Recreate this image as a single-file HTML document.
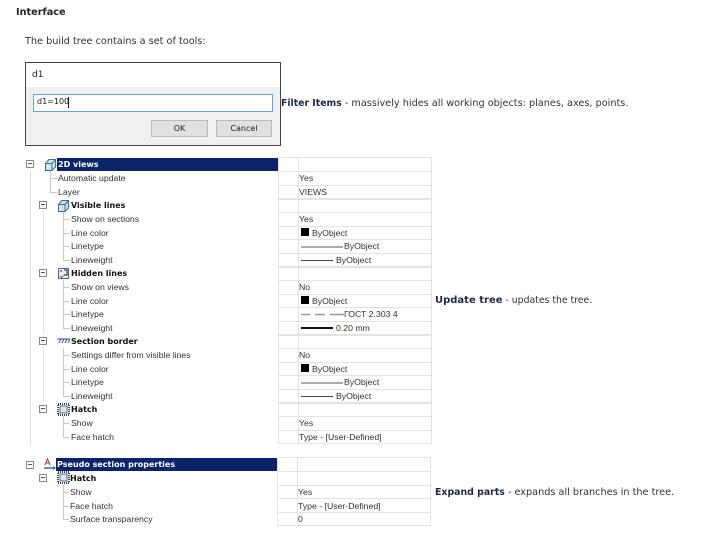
<!DOCTYPE html>
<html><head><meta charset="utf-8">
<style>
html,body{margin:0;padding:0;background:#fff;width:707px;height:533px;overflow:hidden}
body{position:relative;font-family:"DejaVu Sans","Liberation Sans",sans-serif;color:#333}
.a{position:absolute;white-space:nowrap}
.b{font-size:9.7px;line-height:14px;color:#333}
.b b{color:#1c2b4a}
.t{position:absolute;white-space:nowrap;font-family:"Liberation Sans",sans-serif;font-size:8.7px;line-height:12px;color:#333}
.h{font-family:"DejaVu Sans",sans-serif;font-weight:bold;font-size:8px;color:#111}
.w{color:#fff;font-family:"DejaVu Sans",sans-serif;font-weight:bold;font-size:8px}
.l{position:absolute;background:#e4e4dc}
.m{position:absolute;width:6px;height:6px;border:1px solid #8a8a8a;background:#fff}
.m:after{content:"";position:absolute;left:1px;top:2px;width:4px;height:1px;background:#555}
.g{position:absolute;background:#c8c8c8}
.s{position:absolute;width:8px;height:8px;background:#000}
</style></head><body>
<div class="a" style="left:16px;top:6px;font-size:9.7px;line-height:14px;font-weight:bold;color:#222">Interface</div>
<div class="a" style="left:25px;top:35px;font-size:9.7px;line-height:14px;color:#333">The build tree contains a set of tools:</div>

<div class="a" style="left:25px;top:62px;width:254px;height:82px;border:1px solid #444;background:#f0f0f0">
<div class="a" style="left:0;top:0;width:254px;height:24px;background:#fff"></div>
<div class="a" style="left:6px;top:6px;font-family:'DejaVu Sans';font-size:9px;line-height:12px;color:#222">d1</div>
<div class="a" style="left:7px;top:31px;width:238px;height:16px;border:1px solid #5ea6dc;background:#fff"></div>
<div class="a" style="left:11px;top:33px;font-family:'DejaVu Sans';font-size:8px;line-height:12px;color:#222">d1=100</div>
<div class="a" style="left:42px;top:34px;width:1px;height:11px;background:#111"></div>
<div class="a" style="left:125px;top:57px;width:55px;height:15px;border:1px solid #bcbcbc;background:#e1e1e1;font-family:'DejaVu Sans';font-size:8px;line-height:15px;text-align:center;color:#222">OK</div>
<div class="a" style="left:190px;top:57px;width:54px;height:15px;border:1px solid #bcbcbc;background:#e1e1e1;font-family:'DejaVu Sans';font-size:8px;line-height:15px;text-align:center;color:#222">Cancel</div>
</div>

<div class="a b" style="left:281px;top:97px"><b style="font-size:9.3px">Filter Items</b> - massively hides all working objects: planes, axes, points.</div>
<div class="a b" style="left:435px;top:294px;font-size:9.3px"><b style="font-size:10px">Update tree</b> - updates the tree.</div>
<div class="a b" style="left:435px;top:486px"><b style="font-size:9.4px">Expand parts</b> - expands all branches in the tree.</div>

<!-- table 1 grid -->
<div class="l" style="left:278px;top:157px;width:154px;height:1px"></div>
<div class="l" style="left:278px;top:171px;width:154px;height:1px"></div>
<div class="l" style="left:278px;top:185px;width:154px;height:1px"></div>
<div class="l" style="left:278px;top:198px;width:154px;height:2px"></div>
<div class="l" style="left:278px;top:212px;width:154px;height:1px"></div>
<div class="l" style="left:278px;top:226px;width:154px;height:1px"></div>
<div class="l" style="left:278px;top:239px;width:154px;height:1px"></div>
<div class="l" style="left:278px;top:253px;width:154px;height:1px"></div>
<div class="l" style="left:278px;top:266px;width:154px;height:2px"></div>
<div class="l" style="left:278px;top:280px;width:154px;height:1px"></div>
<div class="l" style="left:278px;top:294px;width:154px;height:1px"></div>
<div class="l" style="left:278px;top:307px;width:154px;height:1px"></div>
<div class="l" style="left:278px;top:321px;width:154px;height:1px"></div>
<div class="l" style="left:278px;top:334px;width:154px;height:2px"></div>
<div class="l" style="left:278px;top:348px;width:154px;height:1px"></div>
<div class="l" style="left:278px;top:362px;width:154px;height:1px"></div>
<div class="l" style="left:278px;top:375px;width:154px;height:1px"></div>
<div class="l" style="left:278px;top:389px;width:154px;height:1px"></div>
<div class="l" style="left:278px;top:402px;width:154px;height:2px"></div>
<div class="l" style="left:278px;top:416px;width:154px;height:1px"></div>
<div class="l" style="left:278px;top:430px;width:154px;height:1px"></div>
<div class="l" style="left:278px;top:443px;width:154px;height:1px"></div>
<div class="l" style="left:278px;top:157px;width:1px;height:287px"></div>
<div class="l" style="left:298px;top:157px;width:1px;height:287px"></div>
<div class="l" style="left:431px;top:157px;width:1px;height:287px"></div>

<!-- table 2 grid -->
<div class="l" style="left:277px;top:457px;width:154px;height:1px"></div>
<div class="l" style="left:277px;top:471px;width:154px;height:1px"></div>
<div class="l" style="left:277px;top:485px;width:154px;height:1px"></div>
<div class="l" style="left:277px;top:498px;width:154px;height:1px"></div>
<div class="l" style="left:277px;top:512px;width:154px;height:1px"></div>
<div class="l" style="left:277px;top:525px;width:154px;height:1px"></div>
<div class="l" style="left:277px;top:457px;width:1px;height:69px"></div>
<div class="l" style="left:297px;top:457px;width:1px;height:69px"></div>
<div class="l" style="left:430px;top:457px;width:1px;height:69px"></div>

<!-- selection bars -->
<div class="a" style="left:57px;top:158px;width:221px;height:13px;background:#0a246a"></div>
<div class="a" style="left:56px;top:458px;width:221px;height:13px;background:#0a246a"></div>

<!-- tree guides -->
<div class="l" style="left:30px;top:170px;width:1px;height:274px;background:#dcdcdc"></div>
<div class="l" style="left:43px;top:211px;width:1px;height:54px;background:#e2e2e2"></div>
<div class="l" style="left:43px;top:279px;width:1px;height:54px;background:#e2e2e2"></div>
<div class="l" style="left:43px;top:347px;width:1px;height:54px;background:#e2e2e2"></div>
<div class="g" style="left:50px;top:171px;width:1px;height:21px"></div>
<div class="g" style="left:50px;top:178px;width:7px;height:1px"></div>
<div class="g" style="left:50px;top:192px;width:7px;height:1px"></div>
<div class="g" style="left:63px;top:212px;width:1px;height:48px"></div>
<div class="g" style="left:63px;top:219px;width:7px;height:1px"></div>
<div class="g" style="left:63px;top:233px;width:7px;height:1px"></div>
<div class="g" style="left:63px;top:246px;width:7px;height:1px"></div>
<div class="g" style="left:63px;top:260px;width:7px;height:1px"></div>
<div class="g" style="left:63px;top:280px;width:1px;height:48px"></div>
<div class="g" style="left:63px;top:287px;width:7px;height:1px"></div>
<div class="g" style="left:63px;top:301px;width:7px;height:1px"></div>
<div class="g" style="left:63px;top:314px;width:7px;height:1px"></div>
<div class="g" style="left:63px;top:328px;width:7px;height:1px"></div>
<div class="g" style="left:63px;top:348px;width:1px;height:48px"></div>
<div class="g" style="left:63px;top:355px;width:7px;height:1px"></div>
<div class="g" style="left:63px;top:369px;width:7px;height:1px"></div>
<div class="g" style="left:63px;top:382px;width:7px;height:1px"></div>
<div class="g" style="left:63px;top:396px;width:7px;height:1px"></div>
<div class="g" style="left:63px;top:416px;width:1px;height:21px"></div>
<div class="g" style="left:63px;top:423px;width:7px;height:1px"></div>
<div class="g" style="left:63px;top:437px;width:7px;height:1px"></div>
<div class="g" style="left:63px;top:485px;width:1px;height:35px"></div>
<div class="g" style="left:63px;top:492px;width:6px;height:1px"></div>
<div class="g" style="left:63px;top:506px;width:6px;height:1px"></div>
<div class="g" style="left:63px;top:519px;width:6px;height:1px"></div>

<!-- expanders -->
<div class="m" style="left:26px;top:160px"></div>
<div class="m" style="left:39px;top:201px"></div>
<div class="m" style="left:39px;top:269px"></div>
<div class="m" style="left:39px;top:337px"></div>
<div class="m" style="left:39px;top:405px"></div>
<div class="m" style="left:26px;top:461px"></div>
<div class="m" style="left:39px;top:474px"></div>

<!-- icons -->
<svg class="a" style="left:44px;top:158px" width="13" height="14" viewBox="0 0 13 14"><path d="M1.5 5.5L5 1.5H11.5V9L8 12.500H1.500Z" fill="#cfe3f0" stroke="#3d6f96"/><path d="M1.500 5.500H8V12.500M8 5.500L11.500 1.500" fill="none" stroke="#3d6f96"/></svg>
<svg class="a" style="left:57px;top:199px" width="13" height="14" viewBox="0 0 13 14"><path d="M1.5 5.500L5 1.500H11.500V9L8 12.500H1.500Z" fill="#cfe3f0" stroke="#3d6f96"/><path d="M1.500 5.500H8V12.500M8 5.500L11.500 1.500" fill="none" stroke="#3d6f96"/></svg>
<svg class="a" style="left:57px;top:267px" width="13" height="13" viewBox="0 0 13 13"><rect x="1.500" y="1.500" width="10" height="10" fill="#e8f0f6" stroke="#3d6f96"/><path d="M7 3h3v5H7M3 4h2" fill="none" stroke="#223" stroke-width="1"/><path d="M2.500 9l2 1.500 2-2" fill="none" stroke="#c24848"/></svg>
<svg class="a" style="left:57px;top:338px" width="13" height="7" viewBox="0 0 13 7"><path d="M0 1H13M2 5L4 1M5 5L7 1M8 5L10 1M11 5L13 1" fill="none" stroke="#4a6f9c" stroke-width="1.200"/></svg>
<svg class="a" style="left:57px;top:403px" width="13" height="13" viewBox="0 0 13 13"><rect x="1" y="1" width="11" height="11" fill="none" stroke="#444" stroke-width="2" stroke-dasharray="1 1"/><rect x="3" y="3" width="7" height="7" fill="#dbe8f2" stroke="#4a6f9c"/></svg>
<svg class="a" style="left:57px;top:471px" width="13" height="13" viewBox="0 0 13 13"><rect x="1" y="1" width="11" height="11" fill="none" stroke="#444" stroke-width="2" stroke-dasharray="1 1"/><rect x="3" y="3" width="7" height="7" fill="#dbe8f2" stroke="#4a6f9c"/></svg>
<svg class="a" style="left:44px;top:458px" width="13" height="14" viewBox="0 0 13 14"><path d="M1 7L3.500 1L6 7M2 5H5" fill="none" stroke="#b03a3a"/><path d="M0 10H10" stroke="#3a6aa8" stroke-width="1.500"/><path d="M9 8l3 2-3 2z" fill="#3a6aa8"/></svg>

<!-- tree labels -->
<div class="t w" style="left:58px;top:159px">2D views</div>
<div class="t" style="left:58px;top:172px">Automatic update</div>
<div class="t" style="left:58px;top:186px">Layer</div>
<div class="t h" style="left:71px;top:200px">Visible lines</div>
<div class="t" style="left:71px;top:213px">Show on sections</div>
<div class="t" style="left:71px;top:227px">Line color</div>
<div class="t" style="left:71px;top:240px">Linetype</div>
<div class="t" style="left:71px;top:254px">Lineweight</div>
<div class="t h" style="left:71px;top:268px">Hidden lines</div>
<div class="t" style="left:71px;top:281px">Show on views</div>
<div class="t" style="left:71px;top:295px">Line color</div>
<div class="t" style="left:71px;top:308px">Linetype</div>
<div class="t" style="left:71px;top:322px">Lineweight</div>
<div class="t h" style="left:71px;top:336px">Section border</div>
<div class="t" style="left:71px;top:349px">Settings differ from visible lines</div>
<div class="t" style="left:71px;top:363px">Line color</div>
<div class="t" style="left:71px;top:376px">Linetype</div>
<div class="t" style="left:71px;top:390px">Lineweight</div>
<div class="t h" style="left:71px;top:404px">Hatch</div>
<div class="t" style="left:71px;top:417px">Show</div>
<div class="t" style="left:71px;top:431px">Face hatch</div>
<div class="t w" style="left:57px;top:459px">Pseudo section properties</div>
<div class="t h" style="left:70px;top:473px">Hatch</div>
<div class="t" style="left:70px;top:486px">Show</div>
<div class="t" style="left:70px;top:500px">Face hatch</div>
<div class="t" style="left:70px;top:513px">Surface transparency</div>

<!-- values -->
<div class="t" style="left:299px;top:172px">Yes</div>
<div class="t" style="left:299px;top:186px">VIEWS</div>
<div class="t" style="left:299px;top:213px">Yes</div>
<div class="s" style="left:301px;top:228px"></div><div class="t" style="left:312px;top:227px">ByObject</div>
<div class="a" style="left:301px;top:246px;width:42px;height:2px;background:#aaa"></div><div class="t" style="left:344px;top:240px">ByObject</div>
<div class="a" style="left:301px;top:260px;width:32px;height:1px;background:#444"></div><div class="t" style="left:336px;top:254px">ByObject</div>
<div class="t" style="left:299px;top:281px">No</div>
<div class="s" style="left:301px;top:296px"></div><div class="t" style="left:312px;top:295px">ByObject</div>
<svg class="a" style="left:301px;top:313px" width="43" height="3"><path d="M0 1.500H9M14 1.500H24M29 1.500H43" stroke="#999" stroke-width="1.500"/></svg><div class="t" style="left:344px;top:308px">ГОСТ 2.303 4</div>
<div class="a" style="left:301px;top:327px;width:32px;height:2px;background:#111"></div><div class="t" style="left:336px;top:322px">0.20 mm</div>
<div class="t" style="left:299px;top:349px">No</div>
<div class="s" style="left:301px;top:364px"></div><div class="t" style="left:312px;top:363px">ByObject</div>
<div class="a" style="left:301px;top:382px;width:42px;height:2px;background:#aaa"></div><div class="t" style="left:344px;top:376px">ByObject</div>
<div class="a" style="left:301px;top:396px;width:32px;height:1px;background:#444"></div><div class="t" style="left:336px;top:390px">ByObject</div>
<div class="t" style="left:299px;top:417px">Yes</div>
<div class="t" style="left:299px;top:431px">Type - [User-Defined]</div>
<div class="t" style="left:298px;top:486px">Yes</div>
<div class="t" style="left:298px;top:500px">Type - [User-Defined]</div>
<div class="t" style="left:298px;top:513px">0</div>
</body></html>
